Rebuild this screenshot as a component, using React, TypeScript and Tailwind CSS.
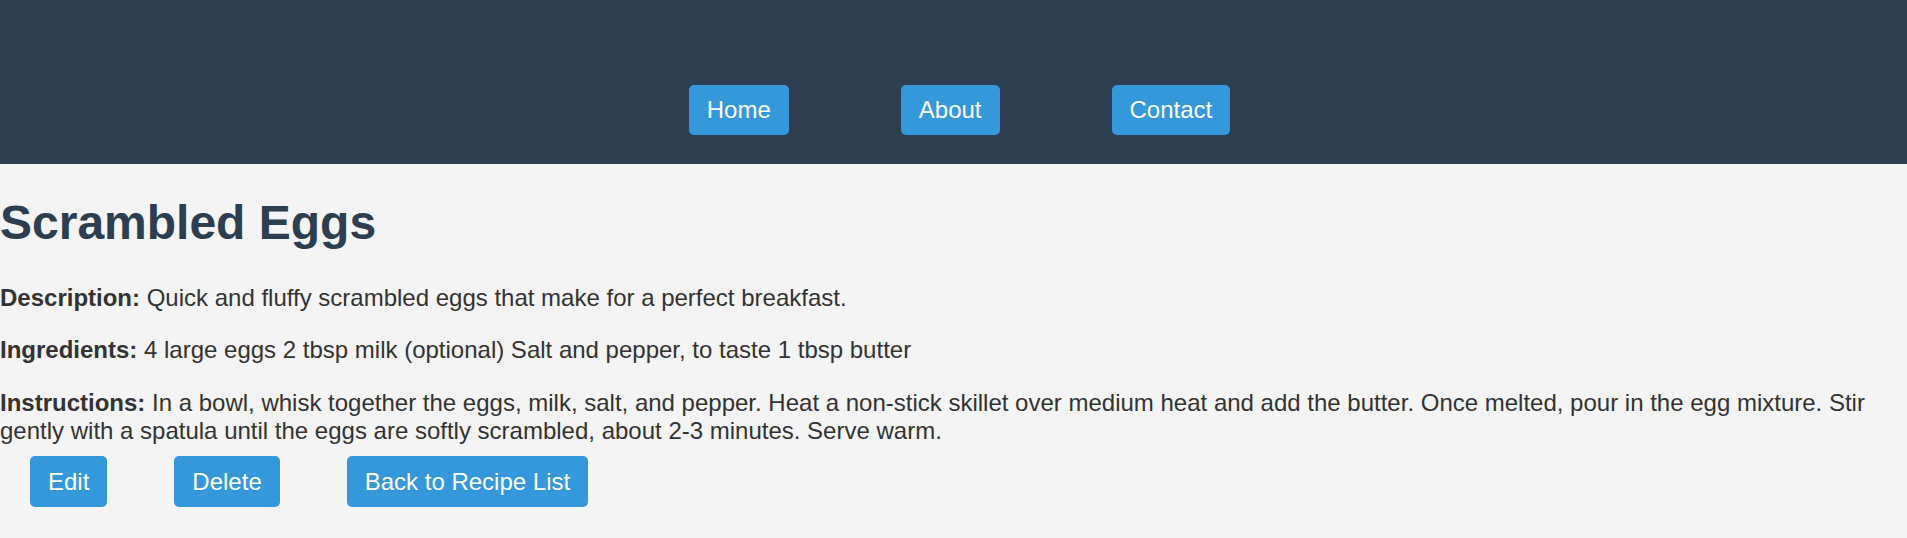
import React from "react";

const navItems = ["Home", "About", "Contact"];

export default function App() {
  return (
    <div
      className="min-h-screen bg-[#f4f4f4] text-[#333333]"
      style={{ fontFamily: '"Liberation Sans", Arial, sans-serif' }}
    >
      <header className="h-[164px] bg-[#2c3e50] pt-[85px] pl-[12px]">
        <nav className="flex justify-center gap-[112px]">
          {navItems.map((item) => (
            <a
              key={item}
              className="block bg-[#3498db] text-white text-[24px] leading-[28px] px-[18px] py-[11px] rounded-[5px]"
            >
              {item}
            </a>
          ))}
        </nav>
      </header>
      <main>
        <h1 className="mt-[31px] text-[48px] leading-[55px] font-bold text-[#2c3e50]">
          Scrambled Eggs
        </h1>
        <p className="mt-[34px] text-[24px] leading-[28px]">
          <strong className="font-bold">Description:</strong> Quick and fluffy scrambled eggs that make for a perfect breakfast.
        </p>
        <p className="mt-[24px] text-[24px] leading-[28px]">
          <strong className="font-bold">Ingredients:</strong> 4 large eggs 2 tbsp milk (optional) Salt and pepper, to taste 1 tbsp butter
        </p>
        <p className="mt-[25px] text-[24px] leading-[28px]">
          <strong className="font-bold">Instructions:</strong> In a bowl, whisk together the eggs, milk, salt, and pepper. Heat a non-stick skillet over medium heat and add the butter. Once melted, pour in the egg mixture. Stir gently with a spatula until the eggs are softly scrambled, about 2-3 minutes. Serve warm.
        </p>
        <div className="mt-[11px] flex gap-[67px] pl-[30px]">
          {["Edit", "Delete", "Back to Recipe List"].map((b) => (
            <button
              key={b}
              className="bg-[#3498db] text-white text-[24px] leading-[27px] px-[18px] py-[12px] rounded-[5px]"
            >
              {b}
            </button>
          ))}
        </div>
      </main>
    </div>
  );
}
